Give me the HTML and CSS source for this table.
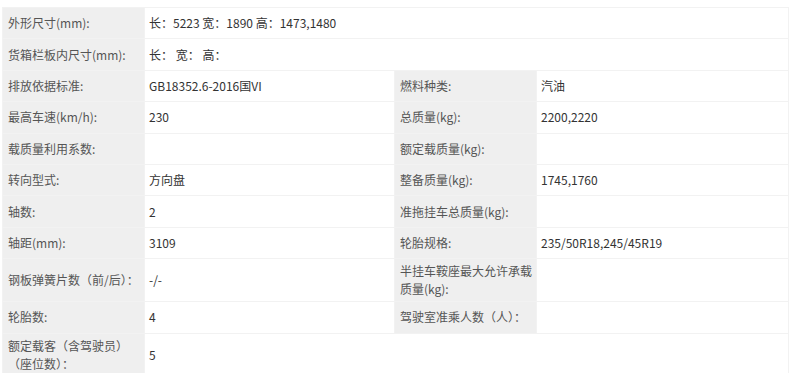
FILE: index.html
```html
<!DOCTYPE html>
<html lang="zh-CN">
<head>
<meta charset="utf-8">
<title>参数</title>
<link rel="stylesheet" href="styles.css">
</head>
<body>
<div class="wrap">
<table class="spec">
  <colgroup>
    <col class="c-label"><col class="c-value"><col class="c-label"><col class="c-value2">
  </colgroup>
  <tbody>
    <tr><th>外形尺寸(mm):</th><td colspan="3">长：5223 宽：1890 高：1473,1480</td></tr>
    <tr><th>货箱栏板内尺寸(mm):</th><td colspan="3">长：&nbsp;宽：&nbsp;高：</td></tr>
    <tr><th>排放依据标准:</th><td>GB18352.6-2016国VI</td><th>燃料种类:</th><td>汽油</td></tr>
    <tr><th>最高车速(km/h):</th><td>230</td><th>总质量(kg):</th><td>2200,2220</td></tr>
    <tr><th>载质量利用系数:</th><td></td><th>额定载质量(kg):</th><td></td></tr>
    <tr><th>转向型式:</th><td>方向盘</td><th>整备质量(kg):</th><td>1745,1760</td></tr>
    <tr><th>轴数:</th><td>2</td><th>准拖挂车总质量(kg):</th><td></td></tr>
    <tr><th>轴距(mm):</th><td>3109</td><th>轮胎规格:</th><td>235/50R18,245/45R19</td></tr>
    <tr class="tall"><th>钢板弹簧片数（前/后）：</th><td>-/-</td><th>半挂车鞍座最大允许承载质量(kg):</th><td></td></tr>
    <tr><th>轮胎数:</th><td>4</td><th>驾驶室准乘人数（人）：</th><td></td></tr>
    <tr class="tall last"><th>额定载客（含驾驶员）（座位数）：</th><td colspan="3">5</td></tr>
  </tbody>
</table>
</div>
</body>
</html>
```

FILE: styles.css
```css
html, body {
  margin: 0;
  padding: 0;
  background: #ffffff;
}
.wrap {
  padding: 7px 0 0 2px;
}
.spec {
  width: 786px;
  border-collapse: collapse;
  table-layout: fixed;
  font-family: "Noto Sans CJK SC", sans-serif;
  font-size: 12px;
  color: #333333;
}
.c-label { width: 142px; }
.c-value { width: 250px; }
.c-value2 { width: 252px; }
.spec th, .spec td {
  border: 1px solid #f2f2f2;
  height: 31.4px;
  padding: 0 3px 0 5px;
  text-align: left;
  vertical-align: middle;
  line-height: 18px;
  box-sizing: border-box;
}
.spec th {
  background: #efefef;
  font-weight: normal;
  color: #555555;
}
.spec td {
  background: #ffffff;
  padding-left: 4px;
}
.spec tr.tall th, .spec tr.tall td {
  height: 43px;
}
.spec tr.last th, .spec tr.last td {
  height: 44px;
}
```
